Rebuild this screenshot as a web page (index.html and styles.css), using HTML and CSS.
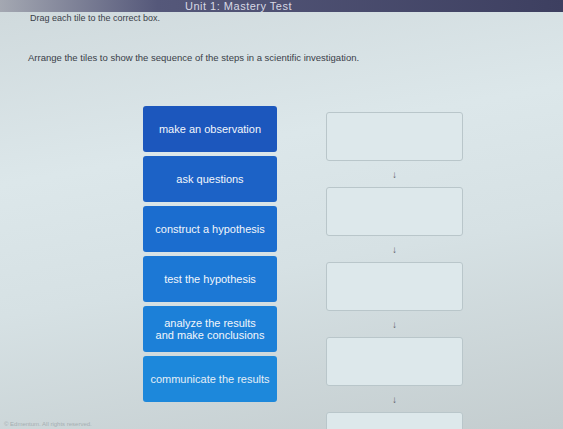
FILE: index.html
```html
<!DOCTYPE html>
<html>
<head>
<meta charset="utf-8">
<link rel="stylesheet" href="styles.css">
</head>
<body>
<div class="page">
  <div class="topbar"><span class="title">Unit 1: Mastery Test</span></div>
  <p class="instr">Drag each tile to the correct box.</p>
  <p class="question">Arrange the tiles to show the sequence of the steps in a scientific investigation.</p>
  <div class="work">
    <div class="tiles">
      <div class="tile t1">make an observation</div>
      <div class="tile t2">ask questions</div>
      <div class="tile t3">construct a hypothesis</div>
      <div class="tile t4">test the hypothesis</div>
      <div class="tile t5">analyze the results<br>and make conclusions</div>
      <div class="tile t6">communicate the results</div>
    </div>
    <div class="boxes">
      <div class="box"></div>
      <div class="arrow">&#8595;</div>
      <div class="box"></div>
      <div class="arrow">&#8595;</div>
      <div class="box"></div>
      <div class="arrow">&#8595;</div>
      <div class="box"></div>
      <div class="arrow">&#8595;</div>
      <div class="box"></div>
    </div>
  </div>
  <div class="footer">© Edmentum. All rights reserved.</div>
</div>
</body>
</html>
```
FILE: styles.css
```css
html, body {
  margin: 0;
  padding: 0;
  width: 563px;
  height: 429px;
  overflow: hidden;
}
body {
  font-family: "Liberation Sans", Arial, sans-serif;
  background: linear-gradient(170deg, #cfd9dc 0%, #dce7ea 35%, #d6e1e4 60%, #c4cdcf 100%);
}
.page {
  position: relative;
  height: 429px;
  display: flex;
  flex-direction: column;
  overflow: hidden;
}
.page > * {
  flex: none;
}
.topbar {
  height: 12px;
  background: linear-gradient(90deg, #a4a8b2 0%, #55587a 28%, #3d3f60 100%);
  overflow: hidden;
  padding-left: 185px;
}
.title {
  display: block;
  color: #d8d8e4;
  font-size: 11px;
  line-height: 12px;
  letter-spacing: 0.5px;
}
.instr {
  margin: 0 0 0 30px;
  font-size: 9px;
  color: #3a4048;
  line-height: 12px;
}
.question {
  margin: 28px 0 0 28px;
  font-size: 9.5px;
  color: #3a4048;
  line-height: 12px;
}
.work {
  display: flex;
  margin-top: 42px;
  padding-left: 143px;
  height: 323px;
  overflow: hidden;
}
.tiles {
  width: 134px;
  display: flex;
  flex-direction: column;
  gap: 4px;
}
.tile {
  height: 46px;
  border-radius: 3px;
  color: #f2f6fb;
  font-size: 11px;
  line-height: 12px;
  display: flex;
  align-items: center;
  justify-content: center;
  text-align: center;
  flex: none;
}
.t1 { background: #1c57bd; }
.t2 { background: #1c62c6; }
.t3 { background: #1b6dcf; }
.t4 { background: #1c78d5; }
.t5 { background: #1c80d8; }
.t6 { background: #1d88db; color: #e4eef6; }
.boxes {
  margin-left: 49px;
  margin-top: 6px;
  width: 137px;
  display: flex;
  flex-direction: column;
}
.box {
  height: 47px;
  border: 1px solid #b9c6ca;
  border-radius: 3px;
  background: #dde8eb;
  flex: none;
}
.arrow {
  height: 26px;
  display: flex;
  align-items: center;
  justify-content: center;
  font-size: 10px;
  color: #5a6266;
  flex: none;
}
.footer {
  position: absolute;
  left: 4px;
  bottom: 2px;
  font-size: 6px;
  color: #a6afb2;
}
```
